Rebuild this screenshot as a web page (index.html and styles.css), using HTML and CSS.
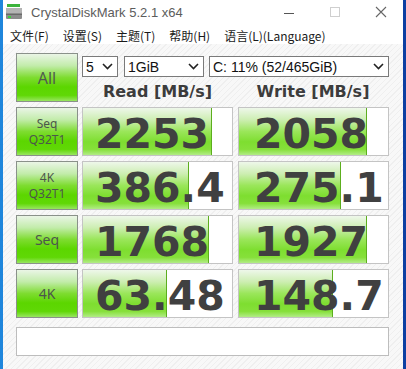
FILE: index.html
```html
<!DOCTYPE html>
<html lang="zh">
<head>
<meta charset="utf-8">
<title>CrystalDiskMark 5.2.1 x64</title>
<link rel="stylesheet" href="styles.css">
</head>
<body>
<div class="window">
  <div class="titlebar">
    <svg class="appicon" width="16" height="16" viewBox="0 0 16 16">
      <rect x="1" y="0" width="13" height="3" fill="#3cb43c"/>
      <rect x="0" y="4" width="16" height="11" rx="1" fill="#8c8c8c"/>
      <rect x="0" y="4" width="16" height="5" rx="1" fill="#b4b4b4"/>
      <rect x="0" y="10" width="16" height="1" fill="#6a6a6a"/>
      <rect x="2" y="12" width="3" height="2" fill="#3cd23c"/>
    </svg>
    <span class="title">CrystalDiskMark 5.2.1 x64</span>
    <div class="controls">
      <svg class="ctl" width="46" height="28" viewBox="0 0 46 28"><line x1="18" y1="14.5" x2="28" y2="14.5" stroke="#555" stroke-width="1"/></svg>
      <svg class="ctl" width="46" height="28" viewBox="0 0 46 28"><rect x="18.5" y="8.5" width="9" height="9" fill="none" stroke="#cfcfcf" stroke-width="1"/></svg>
      <svg class="ctl" width="46" height="28" viewBox="0 0 46 28"><path d="M18 8 L28 18 M28 8 L18 18" stroke="#666" stroke-width="1.1"/></svg>
    </div>
  </div>
  <div class="menubar">
    <span>文件(F)</span>
    <span>设置(S)</span>
    <span>主题(T)</span>
    <span>帮助(H)</span>
    <span>语言(L)(Language)</span>
  </div>
  <div class="content">
    <div class="board">
      <div class="label all">All</div>
      <div class="top">
        <div class="selects">
          <div class="select s-count"><span>5</span><svg width="11" height="7" viewBox="0 0 11 7"><path d="M1 1 L5.5 5.5 L10 1" fill="none" stroke="#222" stroke-width="1.6"/></svg></div>
          <div class="select s-size"><span>1GiB</span><svg width="11" height="7" viewBox="0 0 11 7"><path d="M1 1 L5.5 5.5 L10 1" fill="none" stroke="#222" stroke-width="1.6"/></svg></div>
          <div class="select s-drive"><span>C: 11% (52/465GiB)</span><svg width="11" height="7" viewBox="0 0 11 7"><path d="M1 1 L5.5 5.5 L10 1" fill="none" stroke="#222" stroke-width="1.6"/></svg></div>
        </div>
        <div class="heads">
          <div class="head">Read [MB/s]</div>
          <div class="head">Write [MB/s]</div>
        </div>
      </div>

      <div class="label two"><span>Seq</span><span>Q32T1</span></div>
      <div class="val read"><div class="bar" style="width:129px"></div><div class="num">2253</div></div>
      <div class="val write"><div class="bar" style="width:128px"></div><div class="num">2058</div></div>

      <div class="label two"><span>4K</span><span>Q32T1</span></div>
      <div class="val read"><div class="bar" style="width:106px"></div><div class="num">386.4</div></div>
      <div class="val write"><div class="bar" style="width:102px"></div><div class="num">275.1</div></div>

      <div class="label one">Seq</div>
      <div class="val read"><div class="bar" style="width:126px"></div><div class="num">1768</div></div>
      <div class="val write"><div class="bar" style="width:128px"></div><div class="num">1927</div></div>

      <div class="label one">4K</div>
      <div class="val read"><div class="bar" style="width:84px"></div><div class="num">63.48</div></div>
      <div class="val write"><div class="bar" style="width:94px"></div><div class="num">148.7</div></div>

      <div class="comment"></div>
    </div>
  </div>
</div>
</body>
</html>
```

FILE: styles.css
```css
html, body {
  margin: 0;
  padding: 0;
}
body {
  width: 406px;
  height: 369px;
  overflow: hidden;
  background: linear-gradient(to right, #1f86dc 0%, #1a6ccc 40%, #0c3fa2 100%);
  padding: 0 3px 5px 3px;
  box-sizing: border-box;
}
.window {
  width: 400px;
  height: 364px;
  background: #ffffff;
  display: flex;
  flex-direction: column;
}
.titlebar {
  height: 28px;
  display: flex;
  align-items: center;
}
.appicon {
  margin-left: 3px;
  margin-top: -3px;
}
.title {
  margin-left: 9px;
  margin-top: -3px;
  font-family: "Liberation Sans", Arial, sans-serif;
  font-size: 13px;
  color: #5c5c5c;
}
.controls {
  margin-left: auto;
  display: flex;
  align-self: flex-start;
  margin-right: -1px;
}
.ctl {
  display: block;
  margin-top: -1px;
}
.menubar {
  height: 17px;
  display: flex;
  align-items: center;
  gap: 14px;
  padding-left: 7px;
  font-family: "Noto Sans CJK SC", "Noto Sans", sans-serif;
  font-size: 12px;
  color: #1a1a1a;
  line-height: 17px;
}
.content {
  flex: 1;
  background: repeating-linear-gradient(135deg, #f8f8f8 0px, #f8f8f8 3px, #efefef 3px, #efefef 4px);
  padding: 9px 0 0 13px;
}
.board {
  display: grid;
  grid-template-columns: 62px 151px 152px;
  grid-auto-rows: 49px;
  column-gap: 4px;
  row-gap: 5px;
}
.label {
  box-sizing: border-box;
  border: 1px solid #8a918a;
  background: linear-gradient(to bottom, #eaf5e6 0%, #c2ecaa 25%, #7edc30 50%, #5cd600 70%, #60d806 88%, #98e660 100%);
  color: #4c564c;
  font-family: "Noto Sans", "Liberation Sans", sans-serif;
  display: flex;
  flex-direction: column;
  align-items: center;
  justify-content: center;
}
.label.all {
  font-size: 16px;
  color: #505a50;
}
.label.two {
  font-size: 12px;
  line-height: 16px;
}
.label.one {
  font-size: 14px;
}
.top {
  grid-column: 2 / 4;
  display: flex;
  flex-direction: column;
}
.selects {
  display: flex;
  margin-top: 3px;
  height: 21px;
}
.select {
  box-sizing: border-box;
  height: 21px;
  background: #fff;
  border: 1px solid #7a7a7a;
  display: flex;
  align-items: center;
  justify-content: space-between;
  padding: 0 4px 0 3px;
  font-family: "Liberation Sans", Arial, sans-serif;
  font-size: 14px;
  color: #111;
}
.select svg {
  display: block;
}
.s-count { width: 36px; }
.s-size { width: 80px; margin-left: 6px; }
.s-drive { width: 180px; margin-left: 5px; }
.heads {
  display: grid;
  grid-template-columns: 151px 152px;
  column-gap: 4px;
  margin-top: 5px;
}
.head {
  text-align: center;
  font-family: "DejaVu Sans", Verdana, sans-serif;
  font-weight: bold;
  font-size: 16px;
  line-height: 20px;
  color: #3c3c3c;
}
.val {
  box-sizing: border-box;
  width: 151px;
  border: 1px solid #c4c4c4;
  background: #fff;
  display: grid;
  grid-template-rows: 47px;
  grid-template-columns: 149px;
}
.val.write {
  justify-self: end;
}
.bar {
  grid-area: 1 / 1;
  height: 100%;
  box-sizing: border-box;
  border-right: 1px solid #5cae1e;
  background: linear-gradient(to bottom, #eef7ea 0%, #cdeeb2 25%, #9ae65a 50%, #7ede30 72%, #86e03a 88%, #b2ec86 100%);
}
.num {
  grid-area: 1 / 1;
  align-self: start;
  font-family: "DejaVu Sans", Verdana, sans-serif;
  font-weight: bold;
  font-size: 41px;
  line-height: 40px;
  padding-top: 6px;
  color: #404040;
  white-space: nowrap;
}
.read .num { padding-left: 12px; }
.write .num { padding-left: 15px; }
.comment {
  grid-column: 1 / 4;
  margin-top: 4px;
  height: 29px;
  box-sizing: border-box;
  border: 1px solid #bdbdbd;
  background: #fff;
}
```
